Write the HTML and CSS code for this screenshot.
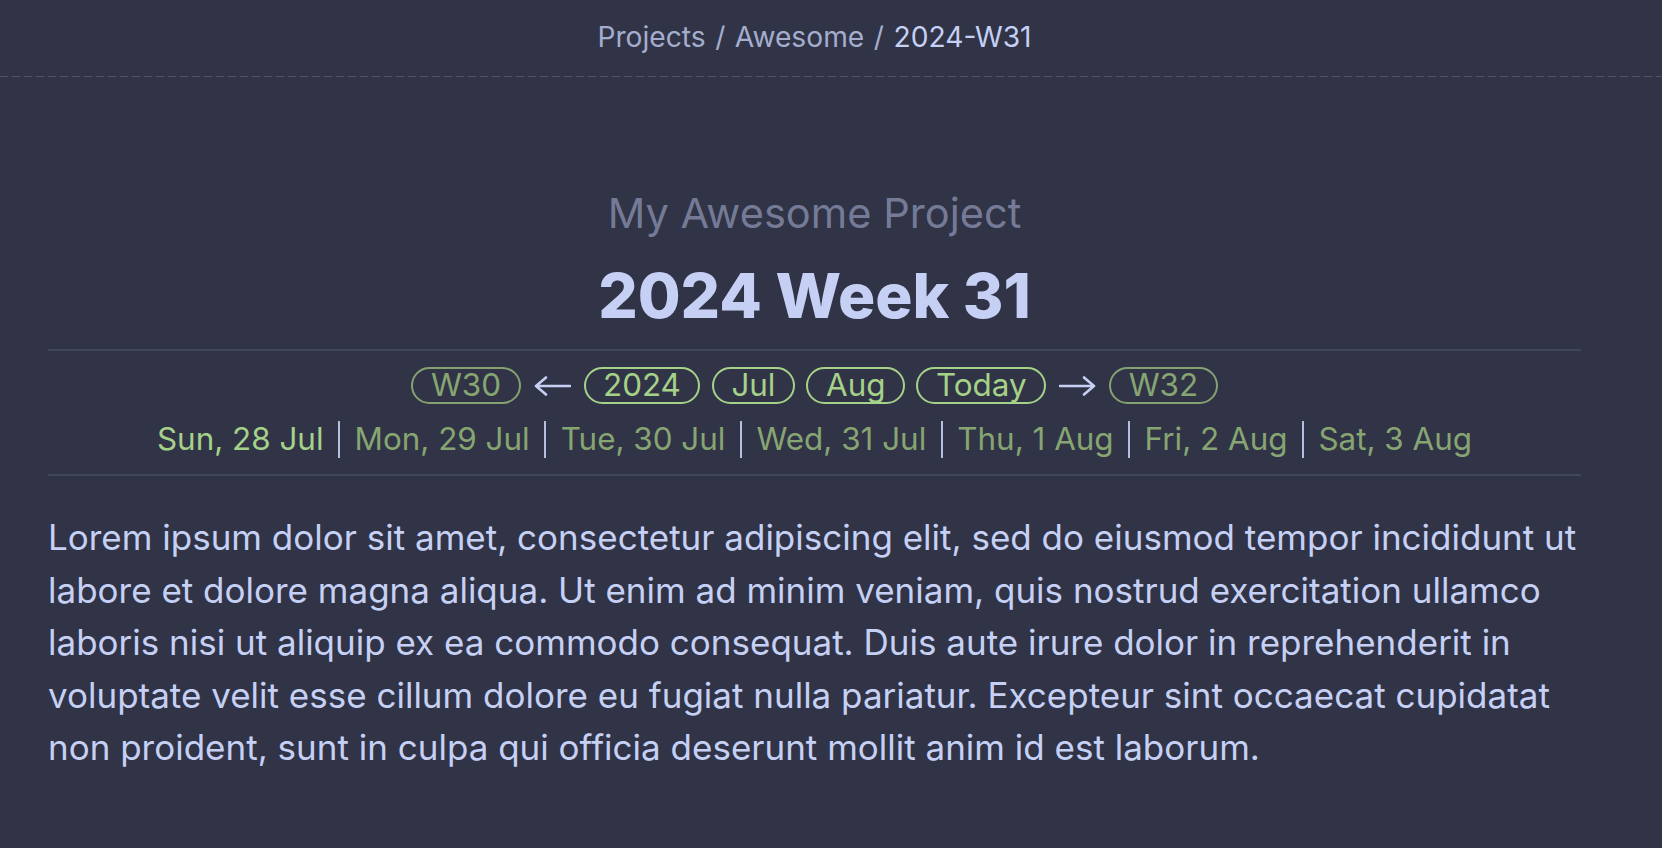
FILE: index.html
```html
<!DOCTYPE html>
<html lang="en">
<head>
<meta charset="utf-8">
<title>2024-W31</title>
<link rel="stylesheet" href="styles.css">
</head>
<body>
<header class="topbar">
  <nav class="crumbs">
    <a class="crumb" href="#">Projects</a>
    <span class="crumb-sep">/</span>
    <a class="crumb" href="#">Awesome</a>
    <span class="crumb-sep">/</span>
    <span class="crumb current">2024-W31</span>
  </nav>
</header>
<main class="page">
  <p class="subtitle">My Awesome Project</p>
  <h1 class="title">2024 Week 31</h1>
  <section class="weeknav">
    <div class="pills">
      <a class="pill dim" href="#">W30</a>
      <svg class="arrow" viewBox="0 0 37 20" width="37" height="20" aria-label="previous"><path d="M2 10H36M12 1.5L2 10L12 18.5" fill="none" stroke="#c6d0f5" stroke-width="2.6" stroke-linecap="round" stroke-linejoin="round"/></svg>
      <a class="pill" href="#">2024</a>
      <a class="pill" href="#">Jul</a>
      <a class="pill" href="#">Aug</a>
      <a class="pill" href="#">Today</a>
      <svg class="arrow" viewBox="0 0 37 20" width="37" height="20" aria-label="next"><path d="M1 10H35M25 1.5L35 10L25 18.5" fill="none" stroke="#c6d0f5" stroke-width="2.6" stroke-linecap="round" stroke-linejoin="round"/></svg>
      <a class="pill dim" href="#">W32</a>
    </div>
    <div class="days">
      <a class="day active" href="#">Sun, 28 Jul</a>
      <a class="day" href="#">Mon, 29 Jul</a>
      <a class="day" href="#">Tue, 30 Jul</a>
      <a class="day" href="#">Wed, 31 Jul</a>
      <a class="day" href="#">Thu, 1 Aug</a>
      <a class="day" href="#">Fri, 2 Aug</a>
      <a class="day" href="#">Sat, 3 Aug</a>
    </div>
  </section>
  <p class="body-text">Lorem ipsum dolor sit amet, consectetur adipiscing elit, sed do eiusmod tempor incididunt ut labore et dolore magna aliqua. Ut enim ad minim veniam, quis nostrud exercitation ullamco laboris nisi ut aliquip ex ea commodo consequat. Duis aute irure dolor in reprehenderit in voluptate velit esse cillum dolore eu fugiat nulla pariatur. Excepteur sint occaecat cupidatat non proident, sunt in culpa qui officia deserunt mollit anim id est laborum.</p>
</main>
</body>
</html>
```
FILE: styles.css
```css
html, body {
  margin: 0;
  padding: 0;
  background: #303446;
}
body {
  font-family: Inter, "Noto Sans", sans-serif;
  color: #c6d0f5;
  height: 848px;
  overflow: hidden;
}
a {
  text-decoration: none;
}

.topbar {
  height: 56px;
  padding-top: 20px;
  position: relative;
}
.topbar::after {
  content: "";
  position: absolute;
  left: 0;
  right: 0;
  bottom: -1px;
  height: 1px;
  background: repeating-linear-gradient(90deg, #4f5469 0 8px, transparent 8px 12px);
}
.crumbs {
  width: 1533px;
  margin-left: 48px;
  display: flex;
  justify-content: center;
  gap: 9.5px;
  font-size: 28.2px;
  line-height: 34px;
}
.crumb, .crumb-sep {
  color: #a5adce;
}
.crumb.current {
  color: #c6d0f5;
}

.page {
  width: 1533px;
  margin-left: 48px;
  padding-top: 113px;
}
.subtitle {
  margin: 0;
  text-align: center;
  font-size: 41.6px;
  line-height: 48px;
  color: #757b97;
}
.title {
  margin: 23px 0 0;
  text-align: center;
  font-size: 62px;
  line-height: 72px;
  font-weight: 800;
  color: #c6d0f5;
}

.weeknav {
  margin-top: 17px;
  border-top: 2px solid #42465a;
  border-bottom: 2px solid #42465a;
  padding: 16px 0;
  display: flex;
  flex-direction: column;
  align-items: center;
  gap: 17px;
}
.pills {
  display: flex;
  align-items: center;
  gap: 11.5px;
  font-size: 31.4px;
}
.pill {
  border: 2px solid #a6d189;
  border-radius: 999px;
  padding: 0 17.5px;
  line-height: 33px;
  color: #a6d189;
}
.pill.dim {
  border-color: #85a172;
  color: #87a572;
}
.arrow {
  display: block;
  margin: 0 1.5px;
}

.days {
  display: flex;
  font-size: 31.4px;
  line-height: 37px;
}
.day {
  color: #87a572;
  padding: 0 14.5px;
  border-left: 2px solid #b5bfe2;
}
.day:first-child {
  border-left: none;
  padding-left: 0;
}
.day:last-child {
  padding-right: 0;
}
.day.active {
  color: #a6d189;
}

.body-text {
  margin: 35px 0 0;
  font-size: 35px;
  line-height: 52.5px;
  color: #c6d0f5;
}
```
